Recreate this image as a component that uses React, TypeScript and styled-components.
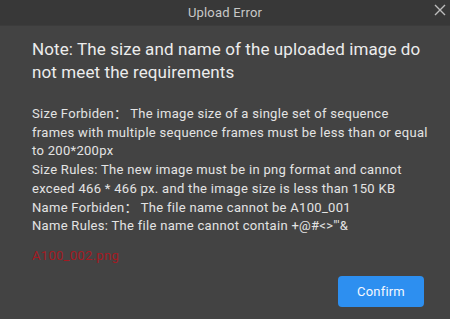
import React from 'react';
import styled, { createGlobalStyle } from 'styled-components';

const Global = createGlobalStyle`
  html, body {
    margin: 0;
    padding: 0;
    background: #434343;
  }
`;

const Dialog = styled.div`
  width: 450px;
  height: 319px;
  display: flex;
  flex-direction: column;
  background: #434343;
  overflow: hidden;
  font-family: Roboto, "Noto Sans CJK SC", "Liberation Sans", sans-serif;
`;

const TitleBar = styled.header`
  height: 25px;
  flex: none;
  position: relative;
  display: flex;
  align-items: center;
  justify-content: center;
  background: #383838;
  color: #c8c8c8;
  font-size: 13px;
  letter-spacing: 0.2px;
  border-bottom: 1px solid #3c3c3c;
`;

const CloseButton = styled.button`
  position: absolute;
  right: 4px;
  top: 4px;
  width: 12px;
  height: 12px;
  padding: 0;
  border: none;
  background: none;
  color: #bdbdbd;
  display: flex;
  cursor: pointer;
`;

const Body = styled.main`
  flex: 1;
  display: flex;
  flex-direction: column;
  padding: 12px 18px 0 32px;
`;

const Heading = styled.h1`
  margin: 0;
  font-size: 17px;
  font-weight: 400;
  line-height: 23px;
  letter-spacing: 0.1px;
  color: #ececec;
`;

const Rules = styled.div`
  margin-top: 21px;
  font-size: 13px;
  line-height: 18.7px;
  letter-spacing: 0.3px;
  color: #e4e4e4;
`;

const Label = styled.span`
  margin-right: 3px;
`;

const FileName = styled.div`
  margin-top: 11px;
  font-size: 13px;
  line-height: 18px;
  letter-spacing: 0.3px;
  color: #a31a22;
`;

const Footer = styled.footer`
  display: flex;
  justify-content: flex-end;
  margin-top: 11px;
  padding-right: 8px;
`;

const ConfirmButton = styled.button`
  width: 86px;
  height: 31px;
  border: none;
  border-radius: 4px;
  background: #2d8ff0;
  color: #f4f8ff;
  font-family: inherit;
  font-size: 13px;
  letter-spacing: 0.2px;
  cursor: pointer;
`;

export default function App() {
  return (
    <Dialog>
      <Global />
      <TitleBar>
        Upload Error
        <CloseButton aria-label="close">
          <svg width="12" height="12" viewBox="0 0 12 12">
            <path d="M1 1L11 11M11 1L1 11" stroke="currentColor" strokeWidth="1.4" />
          </svg>
        </CloseButton>
      </TitleBar>
      <Body>
        <Heading>Note: The size and name of the uploaded image do not meet the requirements</Heading>
        <Rules>
          <div>
            <Label>Size Forbiden：</Label>The image size of a single set of sequence frames with
            multiple sequence frames must be less than or equal to 200*200px
          </div>
          <div>
            Size Rules: The new image must be in png format and cannot exceed 466 * 466 px. and the
            image size is less than 150 KB
          </div>
          <div>
            <Label>Name Forbiden：</Label>The file name cannot be A100_001
          </div>
          <div>Name Rules: The file name cannot contain +@#&lt;&gt;"'&amp;</div>
        </Rules>
        <FileName>A100_002.png</FileName>
        <Footer>
          <ConfirmButton>Confirm</ConfirmButton>
        </Footer>
      </Body>
    </Dialog>
  );
}
